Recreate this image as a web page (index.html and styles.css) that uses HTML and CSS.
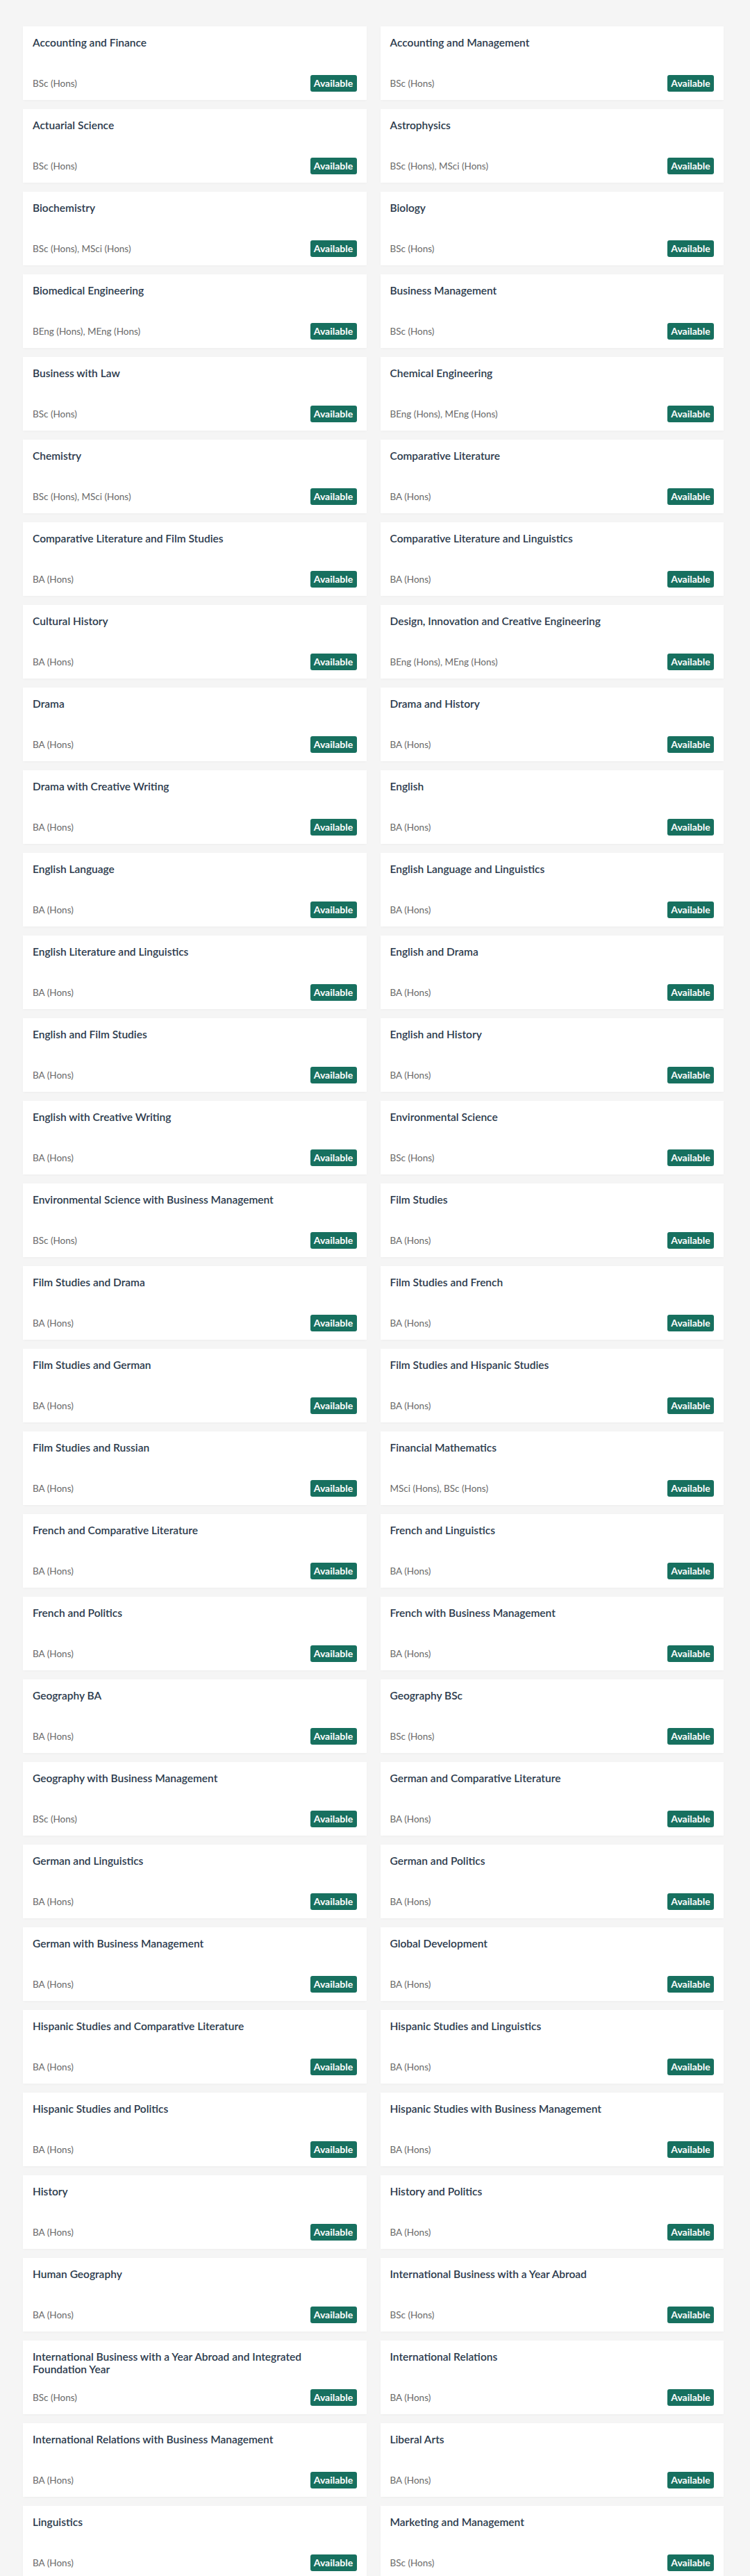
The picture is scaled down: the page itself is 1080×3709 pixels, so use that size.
FILE: index.html
```html
<!DOCTYPE html>
<html lang="en">
<head>
    <meta name="viewport" content="width=device-width, initial-scale=1.0">
    <meta charset="UTF-8">
    <title>Courses</title>
    <link rel="stylesheet" href="styles.css">
</head>
<body>
    <div id="course-list">
        <div class="course-card"><h3 class="course-title">Accounting and Finance</h3><div class="course-meta"><span class="course-award">BSc (Hons)</span><span class="status-badge">Available</span></div></div>
        <div class="course-card"><h3 class="course-title">Accounting and Management</h3><div class="course-meta"><span class="course-award">BSc (Hons)</span><span class="status-badge">Available</span></div></div>
        <div class="course-card"><h3 class="course-title">Actuarial Science</h3><div class="course-meta"><span class="course-award">BSc (Hons)</span><span class="status-badge">Available</span></div></div>
        <div class="course-card"><h3 class="course-title">Astrophysics</h3><div class="course-meta"><span class="course-award">BSc (Hons), MSci (Hons)</span><span class="status-badge">Available</span></div></div>
        <div class="course-card"><h3 class="course-title">Biochemistry</h3><div class="course-meta"><span class="course-award">BSc (Hons), MSci (Hons)</span><span class="status-badge">Available</span></div></div>
        <div class="course-card"><h3 class="course-title">Biology</h3><div class="course-meta"><span class="course-award">BSc (Hons)</span><span class="status-badge">Available</span></div></div>
        <div class="course-card"><h3 class="course-title">Biomedical Engineering</h3><div class="course-meta"><span class="course-award">BEng (Hons), MEng (Hons)</span><span class="status-badge">Available</span></div></div>
        <div class="course-card"><h3 class="course-title">Business Management</h3><div class="course-meta"><span class="course-award">BSc (Hons)</span><span class="status-badge">Available</span></div></div>
        <div class="course-card"><h3 class="course-title">Business with Law</h3><div class="course-meta"><span class="course-award">BSc (Hons)</span><span class="status-badge">Available</span></div></div>
        <div class="course-card"><h3 class="course-title">Chemical Engineering</h3><div class="course-meta"><span class="course-award">BEng (Hons), MEng (Hons)</span><span class="status-badge">Available</span></div></div>
        <div class="course-card"><h3 class="course-title">Chemistry</h3><div class="course-meta"><span class="course-award">BSc (Hons), MSci (Hons)</span><span class="status-badge">Available</span></div></div>
        <div class="course-card"><h3 class="course-title">Comparative Literature</h3><div class="course-meta"><span class="course-award">BA (Hons)</span><span class="status-badge">Available</span></div></div>
        <div class="course-card"><h3 class="course-title">Comparative Literature and Film Studies</h3><div class="course-meta"><span class="course-award">BA (Hons)</span><span class="status-badge">Available</span></div></div>
        <div class="course-card"><h3 class="course-title">Comparative Literature and Linguistics</h3><div class="course-meta"><span class="course-award">BA (Hons)</span><span class="status-badge">Available</span></div></div>
        <div class="course-card"><h3 class="course-title">Cultural History</h3><div class="course-meta"><span class="course-award">BA (Hons)</span><span class="status-badge">Available</span></div></div>
        <div class="course-card"><h3 class="course-title">Design, Innovation and Creative Engineering</h3><div class="course-meta"><span class="course-award">BEng (Hons), MEng (Hons)</span><span class="status-badge">Available</span></div></div>
        <div class="course-card"><h3 class="course-title">Drama</h3><div class="course-meta"><span class="course-award">BA (Hons)</span><span class="status-badge">Available</span></div></div>
        <div class="course-card"><h3 class="course-title">Drama and History</h3><div class="course-meta"><span class="course-award">BA (Hons)</span><span class="status-badge">Available</span></div></div>
        <div class="course-card"><h3 class="course-title">Drama with Creative Writing</h3><div class="course-meta"><span class="course-award">BA (Hons)</span><span class="status-badge">Available</span></div></div>
        <div class="course-card"><h3 class="course-title">English</h3><div class="course-meta"><span class="course-award">BA (Hons)</span><span class="status-badge">Available</span></div></div>
        <div class="course-card"><h3 class="course-title">English Language</h3><div class="course-meta"><span class="course-award">BA (Hons)</span><span class="status-badge">Available</span></div></div>
        <div class="course-card"><h3 class="course-title">English Language and Linguistics</h3><div class="course-meta"><span class="course-award">BA (Hons)</span><span class="status-badge">Available</span></div></div>
        <div class="course-card"><h3 class="course-title">English Literature and Linguistics</h3><div class="course-meta"><span class="course-award">BA (Hons)</span><span class="status-badge">Available</span></div></div>
        <div class="course-card"><h3 class="course-title">English and Drama</h3><div class="course-meta"><span class="course-award">BA (Hons)</span><span class="status-badge">Available</span></div></div>
        <div class="course-card"><h3 class="course-title">English and Film Studies</h3><div class="course-meta"><span class="course-award">BA (Hons)</span><span class="status-badge">Available</span></div></div>
        <div class="course-card"><h3 class="course-title">English and History</h3><div class="course-meta"><span class="course-award">BA (Hons)</span><span class="status-badge">Available</span></div></div>
        <div class="course-card"><h3 class="course-title">English with Creative Writing</h3><div class="course-meta"><span class="course-award">BA (Hons)</span><span class="status-badge">Available</span></div></div>
        <div class="course-card"><h3 class="course-title">Environmental Science</h3><div class="course-meta"><span class="course-award">BSc (Hons)</span><span class="status-badge">Available</span></div></div>
        <div class="course-card"><h3 class="course-title">Environmental Science with Business Management</h3><div class="course-meta"><span class="course-award">BSc (Hons)</span><span class="status-badge">Available</span></div></div>
        <div class="course-card"><h3 class="course-title">Film Studies</h3><div class="course-meta"><span class="course-award">BA (Hons)</span><span class="status-badge">Available</span></div></div>
        <div class="course-card"><h3 class="course-title">Film Studies and Drama</h3><div class="course-meta"><span class="course-award">BA (Hons)</span><span class="status-badge">Available</span></div></div>
        <div class="course-card"><h3 class="course-title">Film Studies and French</h3><div class="course-meta"><span class="course-award">BA (Hons)</span><span class="status-badge">Available</span></div></div>
        <div class="course-card"><h3 class="course-title">Film Studies and German</h3><div class="course-meta"><span class="course-award">BA (Hons)</span><span class="status-badge">Available</span></div></div>
        <div class="course-card"><h3 class="course-title">Film Studies and Hispanic Studies</h3><div class="course-meta"><span class="course-award">BA (Hons)</span><span class="status-badge">Available</span></div></div>
        <div class="course-card"><h3 class="course-title">Film Studies and Russian</h3><div class="course-meta"><span class="course-award">BA (Hons)</span><span class="status-badge">Available</span></div></div>
        <div class="course-card"><h3 class="course-title">Financial Mathematics</h3><div class="course-meta"><span class="course-award">MSci (Hons), BSc (Hons)</span><span class="status-badge">Available</span></div></div>
        <div class="course-card"><h3 class="course-title">French and Comparative Literature</h3><div class="course-meta"><span class="course-award">BA (Hons)</span><span class="status-badge">Available</span></div></div>
        <div class="course-card"><h3 class="course-title">French and Linguistics</h3><div class="course-meta"><span class="course-award">BA (Hons)</span><span class="status-badge">Available</span></div></div>
        <div class="course-card"><h3 class="course-title">French and Politics</h3><div class="course-meta"><span class="course-award">BA (Hons)</span><span class="status-badge">Available</span></div></div>
        <div class="course-card"><h3 class="course-title">French with Business Management</h3><div class="course-meta"><span class="course-award">BA (Hons)</span><span class="status-badge">Available</span></div></div>
        <div class="course-card"><h3 class="course-title">Geography BA</h3><div class="course-meta"><span class="course-award">BA (Hons)</span><span class="status-badge">Available</span></div></div>
        <div class="course-card"><h3 class="course-title">Geography BSc</h3><div class="course-meta"><span class="course-award">BSc (Hons)</span><span class="status-badge">Available</span></div></div>
        <div class="course-card"><h3 class="course-title">Geography with Business Management</h3><div class="course-meta"><span class="course-award">BSc (Hons)</span><span class="status-badge">Available</span></div></div>
        <div class="course-card"><h3 class="course-title">German and Comparative Literature</h3><div class="course-meta"><span class="course-award">BA (Hons)</span><span class="status-badge">Available</span></div></div>
        <div class="course-card"><h3 class="course-title">German and Linguistics</h3><div class="course-meta"><span class="course-award">BA (Hons)</span><span class="status-badge">Available</span></div></div>
        <div class="course-card"><h3 class="course-title">German and Politics</h3><div class="course-meta"><span class="course-award">BA (Hons)</span><span class="status-badge">Available</span></div></div>
        <div class="course-card"><h3 class="course-title">German with Business Management</h3><div class="course-meta"><span class="course-award">BA (Hons)</span><span class="status-badge">Available</span></div></div>
        <div class="course-card"><h3 class="course-title">Global Development</h3><div class="course-meta"><span class="course-award">BA (Hons)</span><span class="status-badge">Available</span></div></div>
        <div class="course-card"><h3 class="course-title">Hispanic Studies and Comparative Literature</h3><div class="course-meta"><span class="course-award">BA (Hons)</span><span class="status-badge">Available</span></div></div>
        <div class="course-card"><h3 class="course-title">Hispanic Studies and Linguistics</h3><div class="course-meta"><span class="course-award">BA (Hons)</span><span class="status-badge">Available</span></div></div>
        <div class="course-card"><h3 class="course-title">Hispanic Studies and Politics</h3><div class="course-meta"><span class="course-award">BA (Hons)</span><span class="status-badge">Available</span></div></div>
        <div class="course-card"><h3 class="course-title">Hispanic Studies with Business Management</h3><div class="course-meta"><span class="course-award">BA (Hons)</span><span class="status-badge">Available</span></div></div>
        <div class="course-card"><h3 class="course-title">History</h3><div class="course-meta"><span class="course-award">BA (Hons)</span><span class="status-badge">Available</span></div></div>
        <div class="course-card"><h3 class="course-title">History and Politics</h3><div class="course-meta"><span class="course-award">BA (Hons)</span><span class="status-badge">Available</span></div></div>
        <div class="course-card"><h3 class="course-title">Human Geography</h3><div class="course-meta"><span class="course-award">BA (Hons)</span><span class="status-badge">Available</span></div></div>
        <div class="course-card"><h3 class="course-title">International Business with a Year Abroad</h3><div class="course-meta"><span class="course-award">BSc (Hons)</span><span class="status-badge">Available</span></div></div>
        <div class="course-card"><h3 class="course-title">International Business with a Year Abroad and Integrated Foundation Year</h3><div class="course-meta"><span class="course-award">BSc (Hons)</span><span class="status-badge">Available</span></div></div>
        <div class="course-card"><h3 class="course-title">International Relations</h3><div class="course-meta"><span class="course-award">BA (Hons)</span><span class="status-badge">Available</span></div></div>
        <div class="course-card"><h3 class="course-title">International Relations with Business Management</h3><div class="course-meta"><span class="course-award">BA (Hons)</span><span class="status-badge">Available</span></div></div>
        <div class="course-card"><h3 class="course-title">Liberal Arts</h3><div class="course-meta"><span class="course-award">BA (Hons)</span><span class="status-badge">Available</span></div></div>
        <div class="course-card"><h3 class="course-title">Linguistics</h3><div class="course-meta"><span class="course-award">BA (Hons)</span><span class="status-badge">Available</span></div></div>
        <div class="course-card"><h3 class="course-title">Marketing and Management</h3><div class="course-meta"><span class="course-award">BSc (Hons)</span><span class="status-badge">Available</span></div></div>
    </div>
</body>
</html>
```

FILE: styles.css
```css
body {
    font-family: Lato, "Open Sans", sans-serif;
    margin: 0;
    padding: 38px 38px 0 33px;
    background-color: #f5f5f5;
}

#course-list {
    display: grid;
    grid-template-columns: 1fr 1fr;
    gap: 13px 20px;
}

.course-card {
    display: flex;
    flex-direction: column;
    justify-content: space-between;
    height: 106px;
    box-sizing: border-box;
    padding: 14px 14px 12px 14px;
    background-color: #fff;
    box-shadow: 0 1px 3px rgba(0,0,0,0.03);
}

.course-title {
    margin: 0;
    font-size: 15.5px;
    font-weight: 600;
    line-height: 18px;
    color: #2b3a4c;
    padding-right: 40px;
}

.course-meta {
    display: flex;
    justify-content: space-between;
    align-items: center;
}

.course-award {
    font-size: 13.5px;
    color: #6a6a6a;
}

.status-badge {
    display: inline-block;
    width: 67px;
    height: 24px;
    line-height: 24px;
    box-sizing: border-box;
    text-align: center;
    background-color: #17705f;
    color: #fff;
    font-size: 14px;
    font-weight: 700;
    border-radius: 3px;
}
```
